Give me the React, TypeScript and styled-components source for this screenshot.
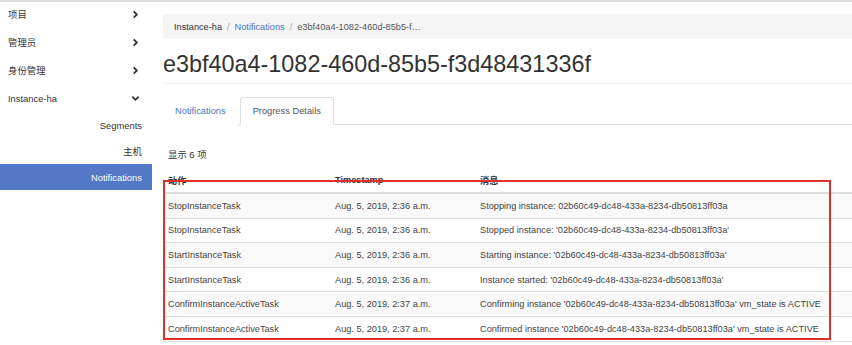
import styled, { createGlobalStyle } from "styled-components";

const GlobalStyle = createGlobalStyle`
  body {
    margin: 0;
    font-family: "Liberation Sans", "Noto Sans CJK SC", Arial, sans-serif;
    color: #333;
    background: #fff;
  }
`;

const navItems = ["项目", "管理员", "身份管理"];
const subItems = ["Segments", "主机", "Notifications"];

const rows = [
  ["StopInstanceTask", "Aug. 5, 2019, 2:36 a.m.", "Stopping instance: 02b60c49-dc48-433a-8234-db50813ff03a"],
  ["StopInstanceTask", "Aug. 5, 2019, 2:36 a.m.", "Stopped instance: '02b60c49-dc48-433a-8234-db50813ff03a'"],
  ["StartInstanceTask", "Aug. 5, 2019, 2:36 a.m.", "Starting instance: '02b60c49-dc48-433a-8234-db50813ff03a'"],
  ["StartInstanceTask", "Aug. 5, 2019, 2:36 a.m.", "Instance started: '02b60c49-dc48-433a-8234-db50813ff03a'"],
  ["ConfirmInstanceActiveTask", "Aug. 5, 2019, 2:37 a.m.", "Confirming instance '02b60c49-dc48-433a-8234-db50813ff03a' vm_state is ACTIVE"],
  ["ConfirmInstanceActiveTask", "Aug. 5, 2019, 2:37 a.m.", "Confirmed instance '02b60c49-dc48-433a-8234-db50813ff03a' vm_state is ACTIVE"],
];

function Chevron({ down }: { down?: boolean }) {
  return (
    <svg width="9" height="9" viewBox="0 0 10 10">
      <path
        d={down ? "M1.5 3 L5 6.5 L8.5 3" : "M3 1.5 L6.5 5 L3 8.5"}
        fill="none"
        stroke="#333"
        strokeWidth="2"
      />
    </svg>
  );
}

function App() {
  return (
    <>
      <GlobalStyle />
      <Page>
        <Sidebar>
          {navItems.map((n) => (
            <NavItem key={n}>
              {n}
              <Chevron />
            </NavItem>
          ))}
          <NavItem>
            Instance-ha
            <Chevron down />
          </NavItem>
          {subItems.map((s) => (
            <SubItem key={s} active={s === "Notifications"}>
              {s}
            </SubItem>
          ))}
        </Sidebar>

        <Main>
          <Breadcrumb>
            <span>Instance-ha</span>
            <Sep>/</Sep>
            <CrumbLink>Notifications</CrumbLink>
            <Sep>/</Sep>
            <CrumbLast>e3bf40a4-1082-460d-85b5-f…</CrumbLast>
          </Breadcrumb>

          <Title>e3bf40a4-1082-460d-85b5-f3d48431336f</Title>

          <Tabs>
            <Tab>Notifications</Tab>
            <Tab active>Progress Details</Tab>
          </Tabs>

          <Count>显示 6 项</Count>

          <TableWrap>
            <Table>
              <colgroup>
                <col style={{ width: 167 }} />
                <col style={{ width: 145 }} />
                <col />
              </colgroup>
              <thead>
                <tr>
                  <Th>动作</Th>
                  <Th>Timestamp</Th>
                  <Th>消息</Th>
                </tr>
              </thead>
              <tbody>
                {rows.map((r, i) => (
                  <Tr key={i} striped={i % 2 === 0}>
                    <Td>{r[0]}</Td>
                    <Td>{r[1]}</Td>
                    <Td>{r[2]}</Td>
                  </Tr>
                ))}
              </tbody>
            </Table>
            <Highlight />
          </TableWrap>
        </Main>
      </Page>
    </>
  );
}
export default App;

const Page = styled.div`
  display: flex;
  border-top: 2px solid #e0e0e0;
  width: 852px;
  height: 343px;
  overflow: hidden;
`;

const Sidebar = styled.nav`
  width: 152px;
  flex-shrink: 0;
  display: flex;
  flex-direction: column;
`;

const NavItem = styled.div`
  height: 28px;
  display: flex;
  align-items: center;
  justify-content: space-between;
  padding: 0 12px 0 8px;
  font-size: 9.4px;
  color: #333;
  &:first-child {
    margin-top: -2px;
  }
`;

const SubItem = styled.div<{ active?: boolean }>`
  height: 26px;
  display: flex;
  align-items: center;
  justify-content: flex-end;
  padding-right: 10px;
  font-size: 9.4px;
  color: ${(p) => (p.active ? "#fff" : "#333")};
  background: ${(p) => (p.active ? "#5179c6" : "transparent")};
`;

const Main = styled.main`
  flex: 1;
  min-width: 0;
  padding: 12px 0 0 11px;
`;

const Breadcrumb = styled.div`
  height: 25px;
  background: #f5f5f5;
  display: flex;
  align-items: center;
  padding: 0 11px;
  font-size: 9.2px;
  color: #333;
  border-radius: 3px 0 0 3px;
`;

const Sep = styled.span`
  color: #aaa;
  padding: 0 5px;
`;

const CrumbLink = styled.span`
  color: #4a78c4;
`;

const CrumbLast = styled.span`
  color: #555;
`;

const Title = styled.h1`
  margin: 12px 0 13px;
  padding-bottom: 6px;
  border-bottom: 1px solid #eee;
  font-size: 23.4px;
  font-weight: 400;
  line-height: 26px;
  color: #333;
  white-space: nowrap;
`;

const Tabs = styled.div`
  display: flex;
  border-bottom: 1px solid #ddd;
  height: 27px;
`;

const Tab = styled.div<{ active?: boolean }>`
  height: 28px;
  box-sizing: border-box;
  padding: 0 ${(p) => (p.active ? 12 : 11)}px;
  margin-right: 2px;
  display: flex;
  align-items: center;
  font-size: 9.3px;
  color: ${(p) => (p.active ? "#555" : "#4a78c4")};
  border: 1px solid ${(p) => (p.active ? "#ddd" : "transparent")};
  border-bottom-color: ${(p) => (p.active ? "#fff" : "transparent")};
  border-radius: 3px 3px 0 0;
  background: #fff;
`;

const Count = styled.div`
  margin: 23px 0 0 5px;
  font-size: 9.4px;
  line-height: 14px;
  color: #333;
`;

const TableWrap = styled.div`
  position: relative;
  margin-top: 8px;
`;

const Table = styled.table`
  width: 100%;
  border-collapse: collapse;
  table-layout: fixed;
  font-size: 9.2px;
`;

const Th = styled.th`
  text-align: left;
  font-weight: 700;
  color: #333;
  height: 16px;
  padding: 2px 5px 4px;
  border-bottom: 2px solid #ddd;
  white-space: nowrap;
`;

const Tr = styled.tr<{ striped?: boolean }>`
  background: ${(p) => (p.striped ? "#f9f9f9" : "#fff")};
`;

const Td = styled.td`
  height: 23.6px;
  padding: 0 5px;
  border-bottom: 1px solid #ddd;
  color: #444;
  white-space: nowrap;
  overflow: hidden;
`;

const Highlight = styled.div`
  position: absolute;
  left: 0;
  top: 10px;
  width: 668px;
  height: 160px;
  box-sizing: border-box;
  border: 2px solid #e0302d;
  pointer-events: none;
`;
